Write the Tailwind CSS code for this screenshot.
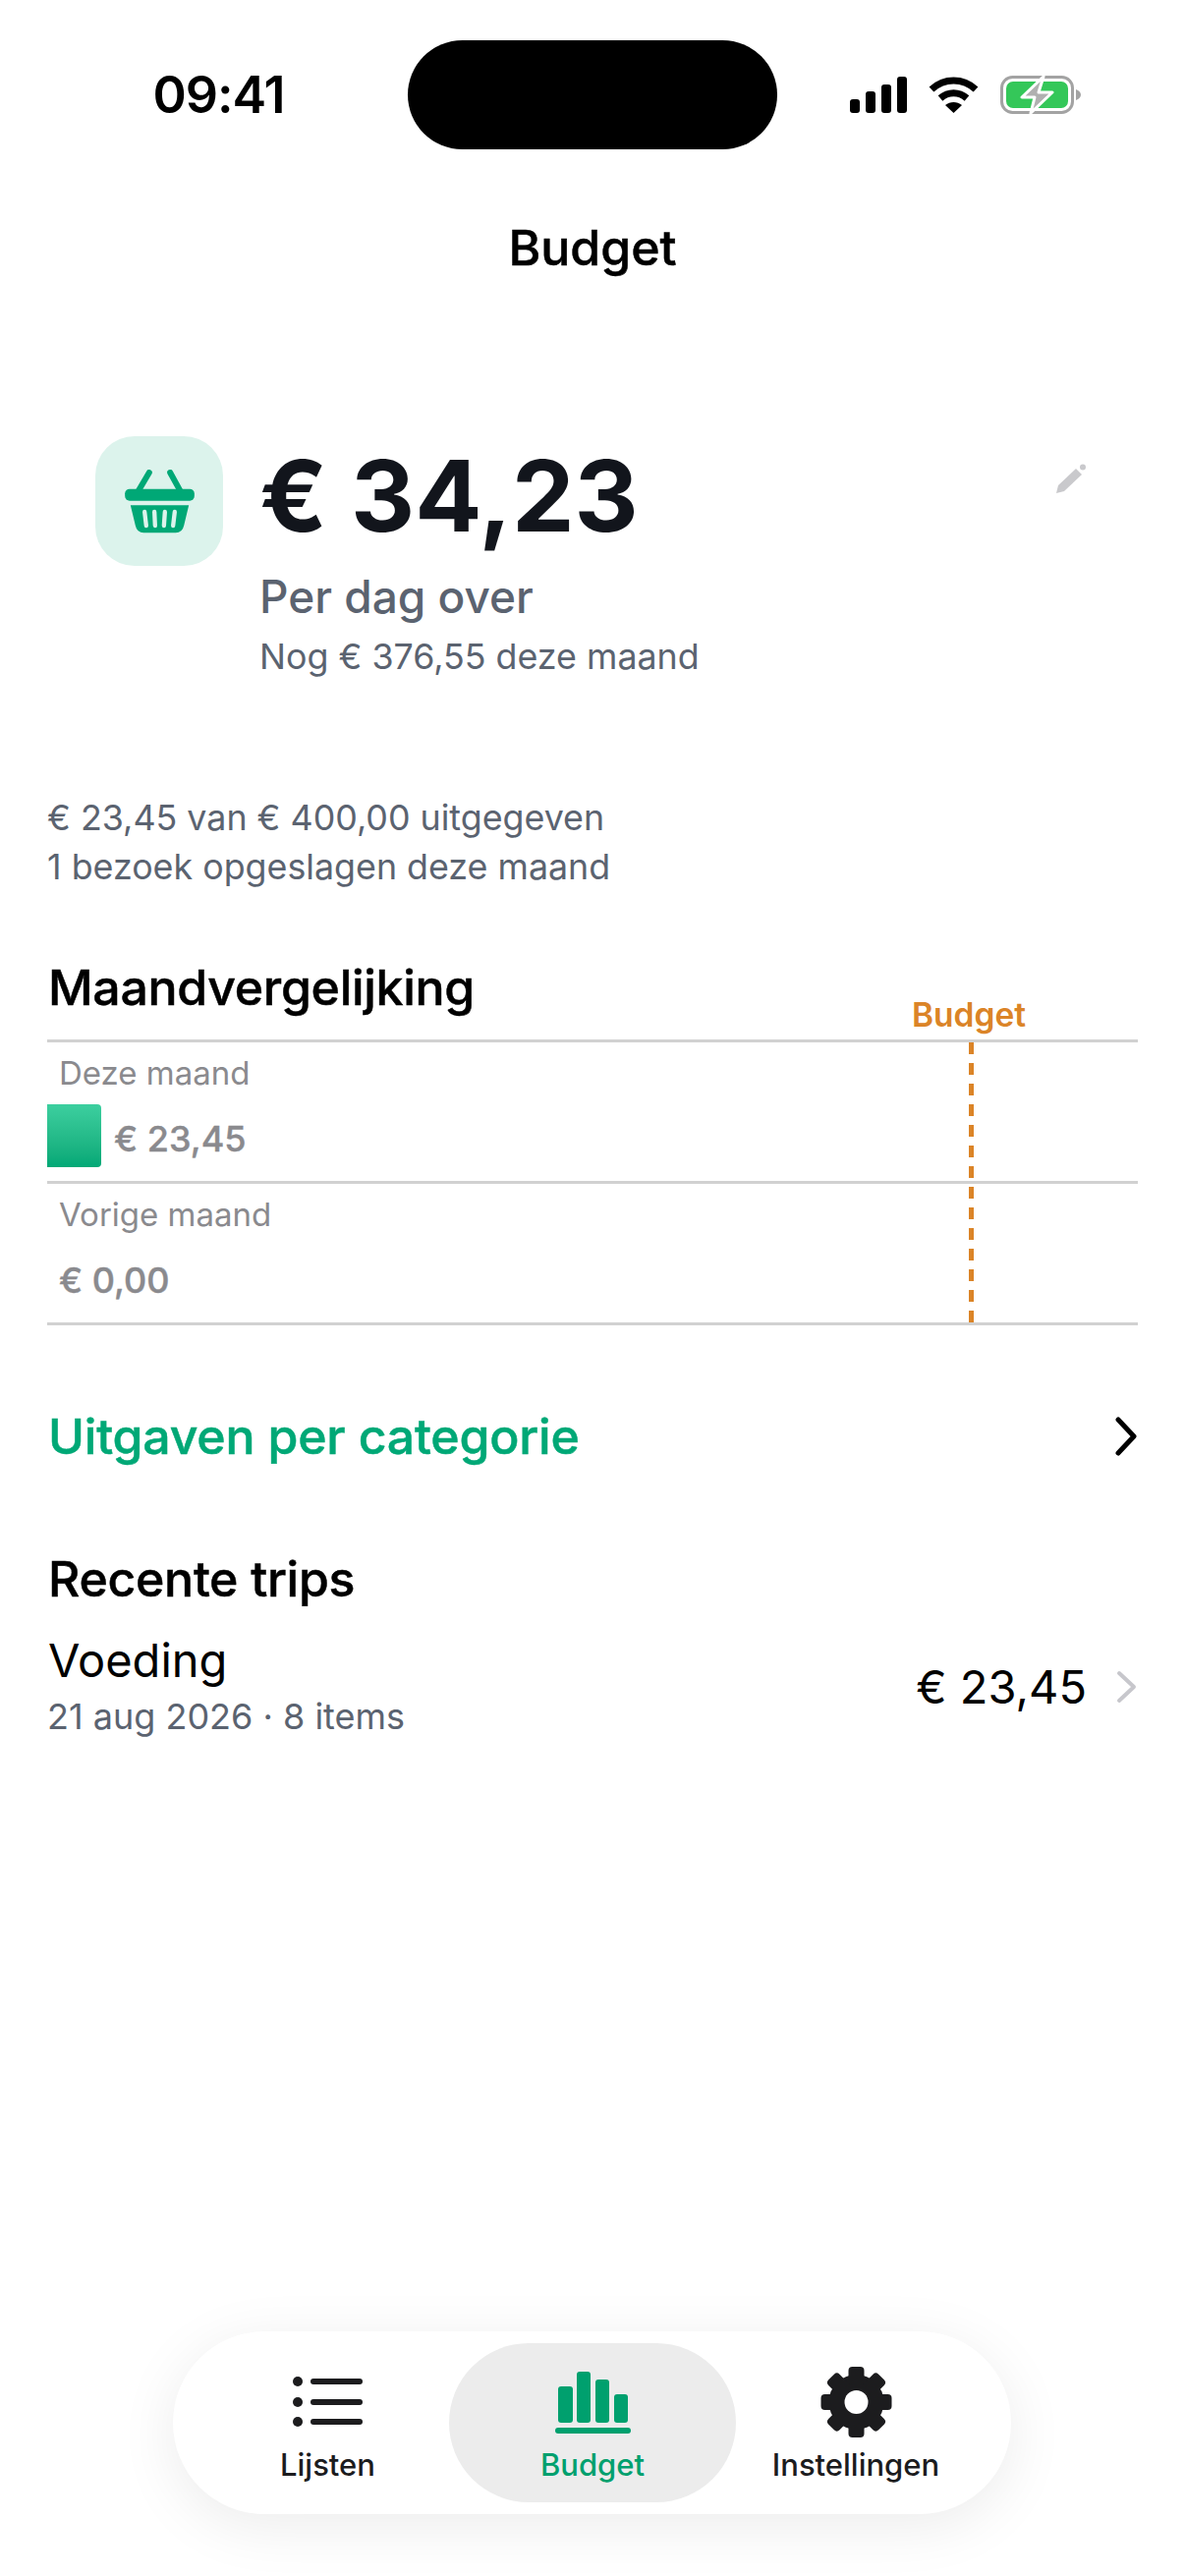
<!DOCTYPE html>
<html lang="nl">
<head>
<meta charset="utf-8">
<script src="https://cdn.jsdelivr.net/npm/@tailwindcss/browser@4"></script>
<title>Budget</title>
</head>
<body class="bg-white">
<div class="w-[1206px] h-[2622px] flex flex-col bg-white text-black overflow-hidden font-['Inter',sans-serif]">
  <div class="grid grid-cols-[415px_376px_415px] pt-[41px] items-center">
    <div class="pl-[30px] text-center text-[52px] leading-[111px] font-semibold tracking-[-1px]">09:41</div>
    <div class="h-[111px] rounded-full bg-black"></div>
    <div class="flex items-center pl-[74px] h-[111px]">
      <svg width="58" height="37" viewBox="0 0 58 37"><rect x="0" y="23" width="10" height="14" rx="3"/><rect x="16" y="15" width="10" height="22" rx="3"/><rect x="32" y="8" width="10" height="29" rx="3"/><rect x="48" y="0" width="10" height="37" rx="3"/></svg>
      <svg class="ml-[22px]" width="51" height="37" viewBox="0 0 51 37"><path d="M3 13 C16 1 35 1 48 13" fill="none" stroke="#000" stroke-width="7"/><path d="M12 22 C20 15 31 15 39 22" fill="none" stroke="#000" stroke-width="7"/><path d="M17 29 C22 25 29 25 34 29 L25.5 37 Z"/></svg>
      <svg class="ml-[22px]" width="82" height="39" viewBox="0 0 82 39"><rect x="1.5" y="1.5" width="72" height="36" rx="11" fill="none" stroke="#a3a3a3" stroke-width="3"/><rect x="6" y="6" width="63" height="27" rx="7" fill="#34c759"/><path d="M77 14 C80 15 82 17 82 19.500 C82 22 80 24 77 25 Z" fill="#a3a3a3"/><path d="M44 1 L22 22 H35 L31 38 L53 17 H39 Z" fill="#b0b0b0" stroke="#fff" stroke-width="3" stroke-linejoin="round"/></svg>
    </div>
  </div>

  <h1 class="mt-[70px] text-center text-[50px] leading-[60px] font-medium [-webkit-text-stroke:0.5px_currentColor]">Budget</h1>

  <section class="mt-[162px] flex pl-[97px] pr-[101px]">
    <div class="w-[130px] h-[132px] rounded-[40px] bg-[#dcf3ec] flex items-center justify-center shrink-0">
      <svg width="71" height="65" viewBox="140 145 212 195">
        <path d="M180 212 L214 154 M310 212 L278 154" stroke="#00a876" stroke-width="18" stroke-linecap="round" fill="none"/>
        <rect x="140" y="204" width="212" height="36" rx="14" fill="#00a876"/>
        <path d="M157 254 H335 L320 316 Q315 338 295 338 H197 Q177 338 172 316 Z" fill="#00a876"/>
        <path d="M200 274 L205 316 M230 274 L232 316 M262 274 L259 316 M292 274 L287 316" stroke="#dcf3ec" stroke-width="13" stroke-linecap="round" fill="none"/>
      </svg>
    </div>
    <div class="ml-[37px] flex-1">
      <div class="text-[101px] leading-[120px] font-bold text-[#12151c]">€ 34,23</div>
      <div class="mt-[15px] text-[46px] leading-[56px] font-medium text-[#5b6370]">Per dag over</div>
      <div class="mt-[9px] text-[35.800px] leading-[48px] text-[#5b6370]">Nog € 376,55 deze maand</div>
    </div>
    <svg class="mt-[28px] shrink-0" width="30" height="30" viewBox="0 0 30 30" fill="#c9c9cc"><path d="M0 30 L2 22 L20 5 L26 11 L8 28 Z"/><circle cx="27" cy="3.500" r="3"/></svg>
  </section>

  <section class="mt-[115px] px-[48px] text-[35.800px] leading-[50px] text-[#5b6370]">
    <p>€ 23,45 van € 400,00 uitgegeven</p>
    <p>1 bezoek opgeslagen deze maand</p>
  </section>

  <section class="mt-[63px] px-[48px]">
    <div class="h-[88px] pt-[5px] relative">
      <h2 class="text-[50px] leading-[60px] font-medium tracking-[-0.3px] [-webkit-text-stroke:0.5px_currentColor] pl-[1px]">Maandvergelijking</h2>
      <span class="absolute left-[880px] bottom-[5px] text-[33.500px] leading-[40px] font-semibold text-[#db8427]">Budget</span>
    </div>
    <div class="relative border-t-[3px] border-[#d1d1d1]">
      <div class="h-[144px] border-b-[3px] border-[#d1d1d1]">
        <div class="pl-[12px] pt-[11px] text-[33px] leading-[40px] text-[#8a8a8e]">Deze maand</div>
        <div class="mt-[12px] flex items-center gap-[13px]">
          <div class="w-[55px] h-[64px] rounded-r-[4px] bg-linear-to-b from-[#3ccf9f] to-[#00a876]"></div>
          <span class="pt-[5px] text-[36px] leading-[46px] font-medium [-webkit-text-stroke:0.4px_currentColor] text-[#8a8a8e]">€ 23,45</span>
        </div>
      </div>
      <div class="h-[144px] border-b-[3px] border-[#d1d1d1]">
        <div class="pl-[12px] pt-[11px] text-[33px] leading-[40px] text-[#8a8a8e]">Vorige maand</div>
        <div class="mt-[12px] h-[64px] flex items-center pl-[12px]">
          <span class="pt-[5px] text-[36px] leading-[46px] font-medium [-webkit-text-stroke:0.4px_currentColor] text-[#8a8a8e]">€ 0,00</span>
        </div>
      </div>
      <div class="absolute left-[938px] top-0 h-[285px] w-[5px] bg-[repeating-linear-gradient(to_bottom,#db8427_0,#db8427_12px,transparent_12px,transparent_21px)]"></div>
    </div>
  </section>

  <section class="mt-[83px] px-[48px] flex items-center justify-between h-[60px]">
    <span class="text-[50px] leading-[60px] font-medium tracking-[-0.2px] [-webkit-text-stroke:0.5px_currentColor] text-[#00a876] pl-[1px]">Uitgaven per categorie</span>
    <svg width="24" height="40" viewBox="0 0 24 40"><path d="M4 3 L20 20 L4 37" fill="none" stroke="#000" stroke-width="5" stroke-linecap="round" stroke-linejoin="round"/></svg>
  </section>

  <section class="mt-[85px] px-[48px]">
    <h2 class="text-[50px] leading-[60px] font-medium tracking-[-0.3px] [-webkit-text-stroke:0.5px_currentColor] pl-[1px]">Recente trips</h2>
    <div class="mt-[25px] flex items-center justify-between">
      <div>
        <div class="text-[47px] leading-[56px] pl-[1px]">Voeding</div>
        <div class="mt-[5px] text-[36px] leading-[48px] text-[#5b6370]">21 aug 2026 · 8 items</div>
      </div>
      <div class="flex items-center gap-[30px]">
        <span class="text-[47px] leading-[56px]">€ 23,45</span>
        <svg width="22" height="34" viewBox="0 0 22 34"><path d="M3 3 L18 17 L3 31" fill="none" stroke="#c7c7cc" stroke-width="4" stroke-linecap="round" stroke-linejoin="round"/></svg>
      </div>
    </div>
  </section>

  <div class="flex-1"></div>

  <nav class="mb-[63px] ml-[176px] w-[853px] h-[186px] rounded-[93px] bg-white shadow-[0_12px_60px_rgba(0,0,0,0.08)] flex p-[12px]">
    <div class="w-[269px] pl-[22px] pt-[12px] flex flex-col items-center text-[#1c1c1e]">
      <svg class="mt-[12px]" width="71" height="72" viewBox="0 0 71 72" fill="#1c1c1e"><ellipse cx="5" cy="15" rx="5" ry="5"/><rect x="18" y="12" width="53" height="6" rx="3"/><ellipse cx="5" cy="36" rx="5" ry="5"/><rect x="18" y="33" width="53" height="6" rx="3"/><ellipse cx="5" cy="56" rx="5" ry="5"/><rect x="18" y="53" width="53" height="6" rx="3"/></svg>
      <span class="mt-[5px] text-[31px] leading-[46px] font-medium">Lijsten</span>
    </div>
    <div class="w-[292px] rounded-[81px] bg-[#ececec] pt-[24px] flex flex-col items-center text-[#00a06e]">
      <svg width="77" height="72" viewBox="0 0 77 72" fill="#00a06e"><rect x="3" y="20" width="15" height="37" rx="3"/><rect x="22" y="5" width="14" height="52" rx="3"/><rect x="41" y="13" width="14" height="44" rx="3"/><rect x="60" y="28" width="14" height="29" rx="3"/><rect x="0" y="62" width="77" height="6" rx="3"/></svg>
      <span class="mt-[5px] text-[31px] leading-[46px] font-medium">Budget</span>
    </div>
    <div class="w-[268px] pr-[24px] pt-[12px] flex flex-col items-center text-[#1c1c1e]">
      <svg class="mt-[12px]" width="73" height="72" viewBox="0 0 73 72"><g fill="#1c1c1e"><circle cx="36.500" cy="36" r="28"/><rect x="28.500" y="0" width="16" height="72" rx="4"/><rect x="28.500" y="0" width="16" height="72" rx="4" transform="rotate(45 36.500 36)"/><rect x="28.500" y="0" width="16" height="72" rx="4" transform="rotate(90 36.500 36)"/><rect x="28.500" y="0" width="16" height="72" rx="4" transform="rotate(135 36.500 36)"/></g><circle cx="36.500" cy="36" r="12" fill="#fff"/></svg>
      <span class="mt-[5px] text-[31px] leading-[46px] font-medium">Instellingen</span>
    </div>
  </nav>
</div>
</body>
</html>
